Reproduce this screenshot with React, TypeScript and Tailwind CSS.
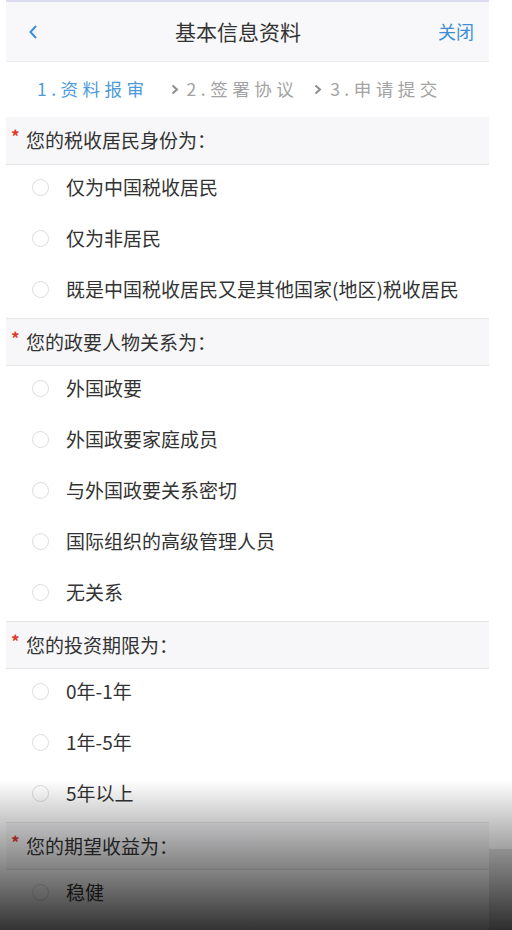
import React from "react";

const sections = [
  {
    title: "您的税收居民身份为：",
    options: ["仅为中国税收居民", "仅为非居民", "既是中国税收居民又是其他国家(地区)税收居民"],
  },
  {
    title: "您的政要人物关系为：",
    options: ["外国政要", "外国政要家庭成员", "与外国政要关系密切", "国际组织的高级管理人员", "无关系"],
  },
  {
    title: "您的投资期限为：",
    options: ["0年-1年", "1年-5年", "5年以上"],
  },
  {
    title: "您的期望收益为：",
    options: ["稳健", "积极"],
  },
];

function Radio() {
  return <span className="h-[17px] w-[17px] shrink-0 rounded-full border border-[#dcdcdc] bg-white" />;
}

function Chevron() {
  return (
    <svg width="8" height="11" viewBox="0 0 8 11" className="mr-[8px]">
      <path d="M1.5 1.5 L6 5.5 L1.5 9.5" fill="none" stroke="#8e8e8e" strokeWidth="2" />
    </svg>
  );
}

export default function App() {
  return (
    <div className="relative h-[930px] w-[512px] overflow-hidden bg-white font-['Noto_Sans_CJK_SC','Noto_Sans',sans-serif] text-[#333]">
      <div className="ml-[6px] w-[483px]">
        <div className="h-[2px] bg-[#dcdcf0]" />

        {/* Header */}
        <div className="flex h-[60px] items-center justify-between border-b border-[#ececf0] bg-[#f8f8fa] pl-[22px] pr-[15px]">
          <svg width="10" height="16" viewBox="0 0 10 16">
            <path d="M8 2 L2.5 8 L8 14" fill="none" stroke="#3d8ed8" strokeWidth="2" />
          </svg>
          <span className="text-[21px] text-[#333]">基本信息资料</span>
          <span className="text-[18px] text-[#3d8ed8]">关闭</span>
        </div>

        {/* Steps */}
        <div className="flex h-[55px] items-center bg-white pl-[31px] text-[17.5px] tracking-[4.5px]">
          <span className="text-[#4b9bd9]">1.资料报审</span>
          <span className="ml-[22px] flex items-center text-[#a3a3a3]">
            <Chevron />2.签署协议
          </span>
          <span className="ml-[16px] flex items-center text-[#a3a3a3]">
            <Chevron />3.申请提交
          </span>
        </div>

        {sections.map((s, i) => (
          <div key={s.title}>
            <div className={`flex h-[48px] items-center border-b border-[#e6e6e9] bg-[#f7f7f9] pl-[5px] ${i > 0 ? "border-t" : ""}`}>
              <span className="-mt-[10px] mr-[5px] w-[10px] text-[17px] font-bold leading-none text-[#e0392b]">*</span>
              <span className="text-[19px]">{s.title}</span>
            </div>
            <div>
              {s.options.map((o) => (
                <div key={o} className="flex h-[51px] items-center gap-[17px] pb-[6px] pl-[26px]">
                  <Radio />
                  <span className="text-[19px] text-[#333]">{o}</span>
                </div>
              ))}
            </div>
          </div>
        ))}
      </div>

      {/* video-style shade over the bottom */}
      <div className="pointer-events-none absolute inset-x-0 bottom-0 h-[150px] bg-gradient-to-b from-transparent to-black/80" />
      <div className="pointer-events-none absolute bottom-0 right-0 h-[81px] w-[23px] bg-black/10" />
    </div>
  );
}
